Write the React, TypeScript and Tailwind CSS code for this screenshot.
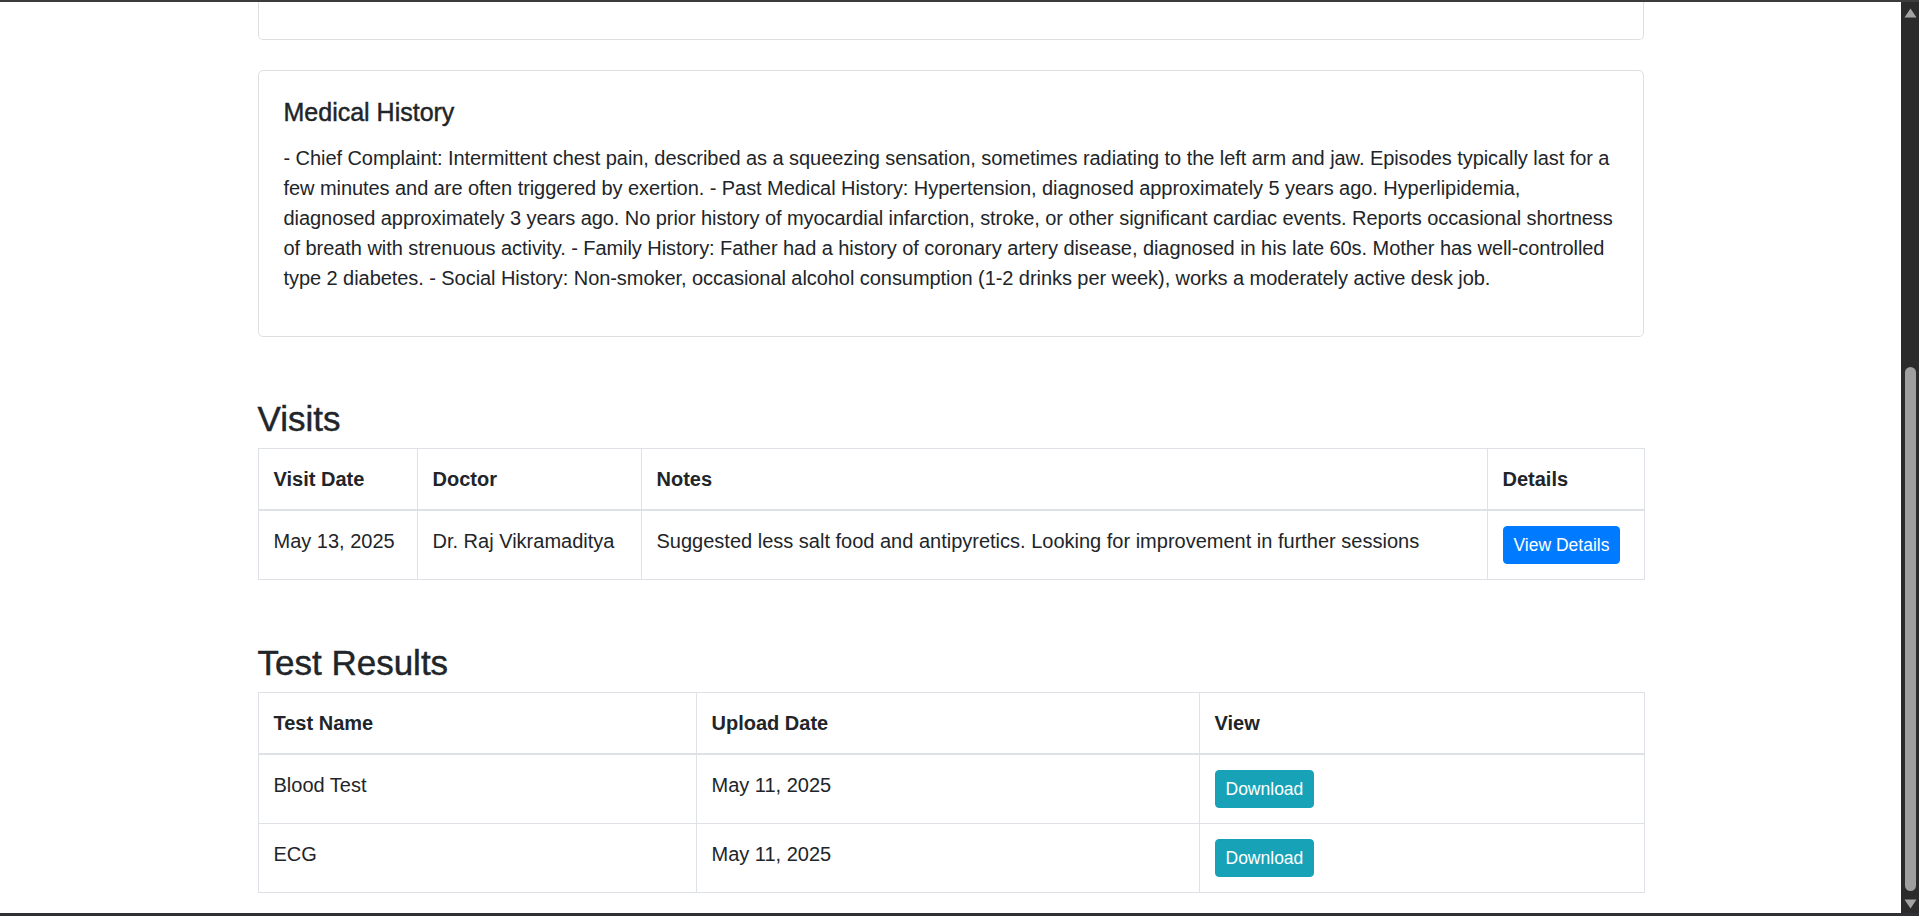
const historyLines = [
  "- Chief Complaint: Intermittent chest pain, described as a squeezing sensation, sometimes radiating to the left arm and jaw. Episodes typically last for a",
  "few minutes and are often triggered by exertion. - Past Medical History: Hypertension, diagnosed approximately 5 years ago. Hyperlipidemia,",
  "diagnosed approximately 3 years ago. No prior history of myocardial infarction, stroke, or other significant cardiac events. Reports occasional shortness",
  "of breath with strenuous activity. - Family History: Father had a history of coronary artery disease, diagnosed in his late 60s. Mother has well-controlled",
  "type 2 diabetes. - Social History: Non-smoker, occasional alcohol consumption (1-2 drinks per week), works a moderately active desk job.",
];

const tests = [
  { name: "Blood Test", date: "May 11, 2025" },
  { name: "ECG", date: "May 11, 2025" },
];

function Scrollbar() {
  return (
    <div className="flex w-[18px] shrink-0 flex-col bg-[#2b2b2b] pt-[6px]">
      <svg className="ml-[3px] h-[10px] w-[13px]" viewBox="0 0 13 10">
        <polygon points="0.5,9.5 6.5,0.5 12.5,9.5" fill="#a3a3a3" />
      </svg>
      <div className="ml-[4px] mt-[349px] h-[524px] w-[11px] rounded-full bg-[#9f9f9f]" />
      <svg className="ml-[3px] mt-[8px] h-[10px] w-[13px]" viewBox="0 0 13 10">
        <polygon points="0.5,0.5 12.5,0.5 6.5,9.5" fill="#a3a3a3" />
      </svg>
    </div>
  );
}

export default function App() {
  const th =
    "border border-b-2 border-[#dee2e6] px-[15px] py-[15px] text-left align-bottom font-bold";
  const td = "border border-[#dee2e6] px-[15px] py-[15px] text-left align-top";
  const heading = "[-webkit-text-stroke:0.45px_#212529]";
  return (
    <div className="flex h-[916px] w-[1919px] flex-col overflow-hidden bg-white font-['Liberation_Sans',Arial,sans-serif] text-[#212529]">
      <div className="h-[2px] shrink-0 bg-[#3c3c3c]" />
      <div className="flex min-h-0 flex-1 overflow-hidden">
        <main className="min-w-0 flex-1 overflow-hidden">
          <div className="mx-auto w-[1386px]">
            <div className="h-[38px] rounded-b-[5px] border border-t-0 border-[#dfdfdf]" />

            <section className="mt-[30px] rounded-[5px] border border-[#dfdfdf] p-[25px]">
              <h5 className={`mb-[15px] pt-[1px] text-[25px] leading-[30px] font-normal ${heading}`}>
                Medical History
              </h5>
              <p className="mb-[18px] pt-[1px] text-[20px] leading-[30px] tracking-[-0.06px]">
                {historyLines.map((l, i) => (
                  <span key={i} className="block whitespace-nowrap">
                    {l}
                  </span>
                ))}
              </p>
            </section>

            <h3 className={`mt-[61px] mb-[8px] text-[35px] leading-[42px] font-normal ${heading}`}>Visits</h3>
            <table className="w-full table-fixed border-collapse text-[20px] leading-[30px]">
              <thead>
                <tr>
                  <th className={`${th} w-[159px]`}>Visit Date</th>
                  <th className={`${th} w-[224px]`}>Doctor</th>
                  <th className={`${th} w-[846px]`}>Notes</th>
                  <th className={`${th} w-[157px]`}>Details</th>
                </tr>
              </thead>
              <tbody>
                <tr>
                  <td className={td}>May 13, 2025</td>
                  <td className={td}>Dr. Raj Vikramaditya</td>
                  <td className={td}>
                    Suggested less salt food and antipyretics. Looking for improvement in further sessions
                  </td>
                  <td className={td}>
                    <button className="h-[38px] rounded-[4px] border border-[#007bff] bg-[#007bff] px-[10px] text-[17.5px] leading-[26px] text-white">
                      View Details
                    </button>
                  </td>
                </tr>
              </tbody>
            </table>

            <h3 className={`mt-[62px] mb-[8px] text-[35px] leading-[42px] font-normal ${heading}`}>
              Test Results
            </h3>
            <table className="w-full table-fixed border-collapse text-[20px] leading-[30px]">
              <thead>
                <tr>
                  <th className={`${th} w-[438px]`}>Test Name</th>
                  <th className={`${th} w-[503px]`}>Upload Date</th>
                  <th className={`${th} w-[445px]`}>View</th>
                </tr>
              </thead>
              <tbody>
                {tests.map((t) => (
                  <tr key={t.name}>
                    <td className={td}>{t.name}</td>
                    <td className={td}>{t.date}</td>
                    <td className={td}>
                      <button className="h-[38px] rounded-[4px] border border-[#17a2b8] bg-[#17a2b8] px-[10px] text-[17.5px] leading-[26px] text-white">
                        Download
                      </button>
                    </td>
                  </tr>
                ))}
              </tbody>
            </table>
          </div>
        </main>
        <Scrollbar />
      </div>
      <div className="h-[3px] shrink-0 bg-[#2e3033]" />
    </div>
  );
}
